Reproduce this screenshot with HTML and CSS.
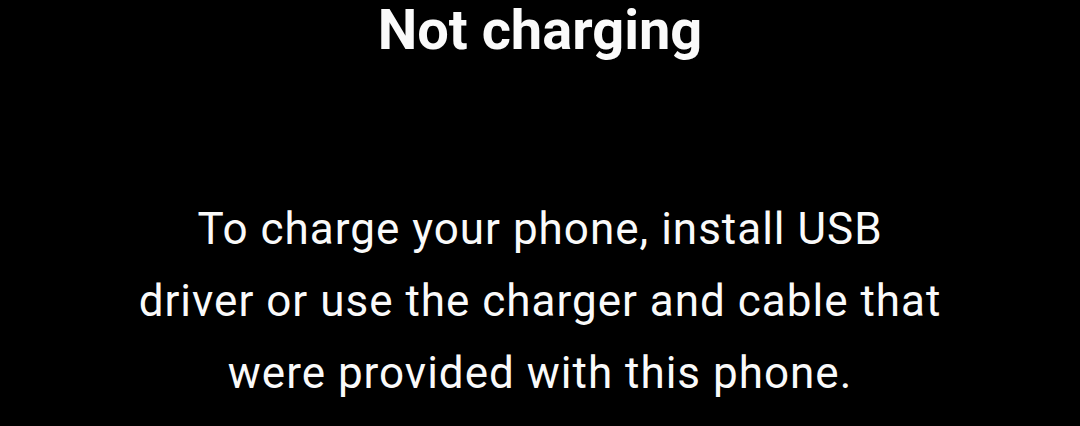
FILE: index.html
```html
<!DOCTYPE html>
<html>
<head>
<meta charset="utf-8">
<link rel="stylesheet" href="styles.css">
</head>
<body>
<main class="screen">
  <h1 class="title">Not charging</h1>
  <p class="message">To charge your phone, install USB driver or use the charger and cable that were provided with this phone.</p>
</main>
</body>
</html>
```
FILE: styles.css
```css
html, body {
  margin: 0;
  padding: 0;
  background: #000;
  height: 100%;
  overflow: hidden;
}
.screen {
  display: flex;
  flex-direction: column;
  align-items: center;
  color: #fafafa;
  font-family: Roboto, "Liberation Sans", sans-serif;
  text-align: center;
}
.title {
  margin: 0;
  font-size: 56px;
  font-weight: 700;
  line-height: 60px;
}
.message {
  margin: 133px 0 0;
  width: 805px;
  font-size: 44px;
  font-weight: 400;
  letter-spacing: 1px;
  line-height: 72px;
}
```
